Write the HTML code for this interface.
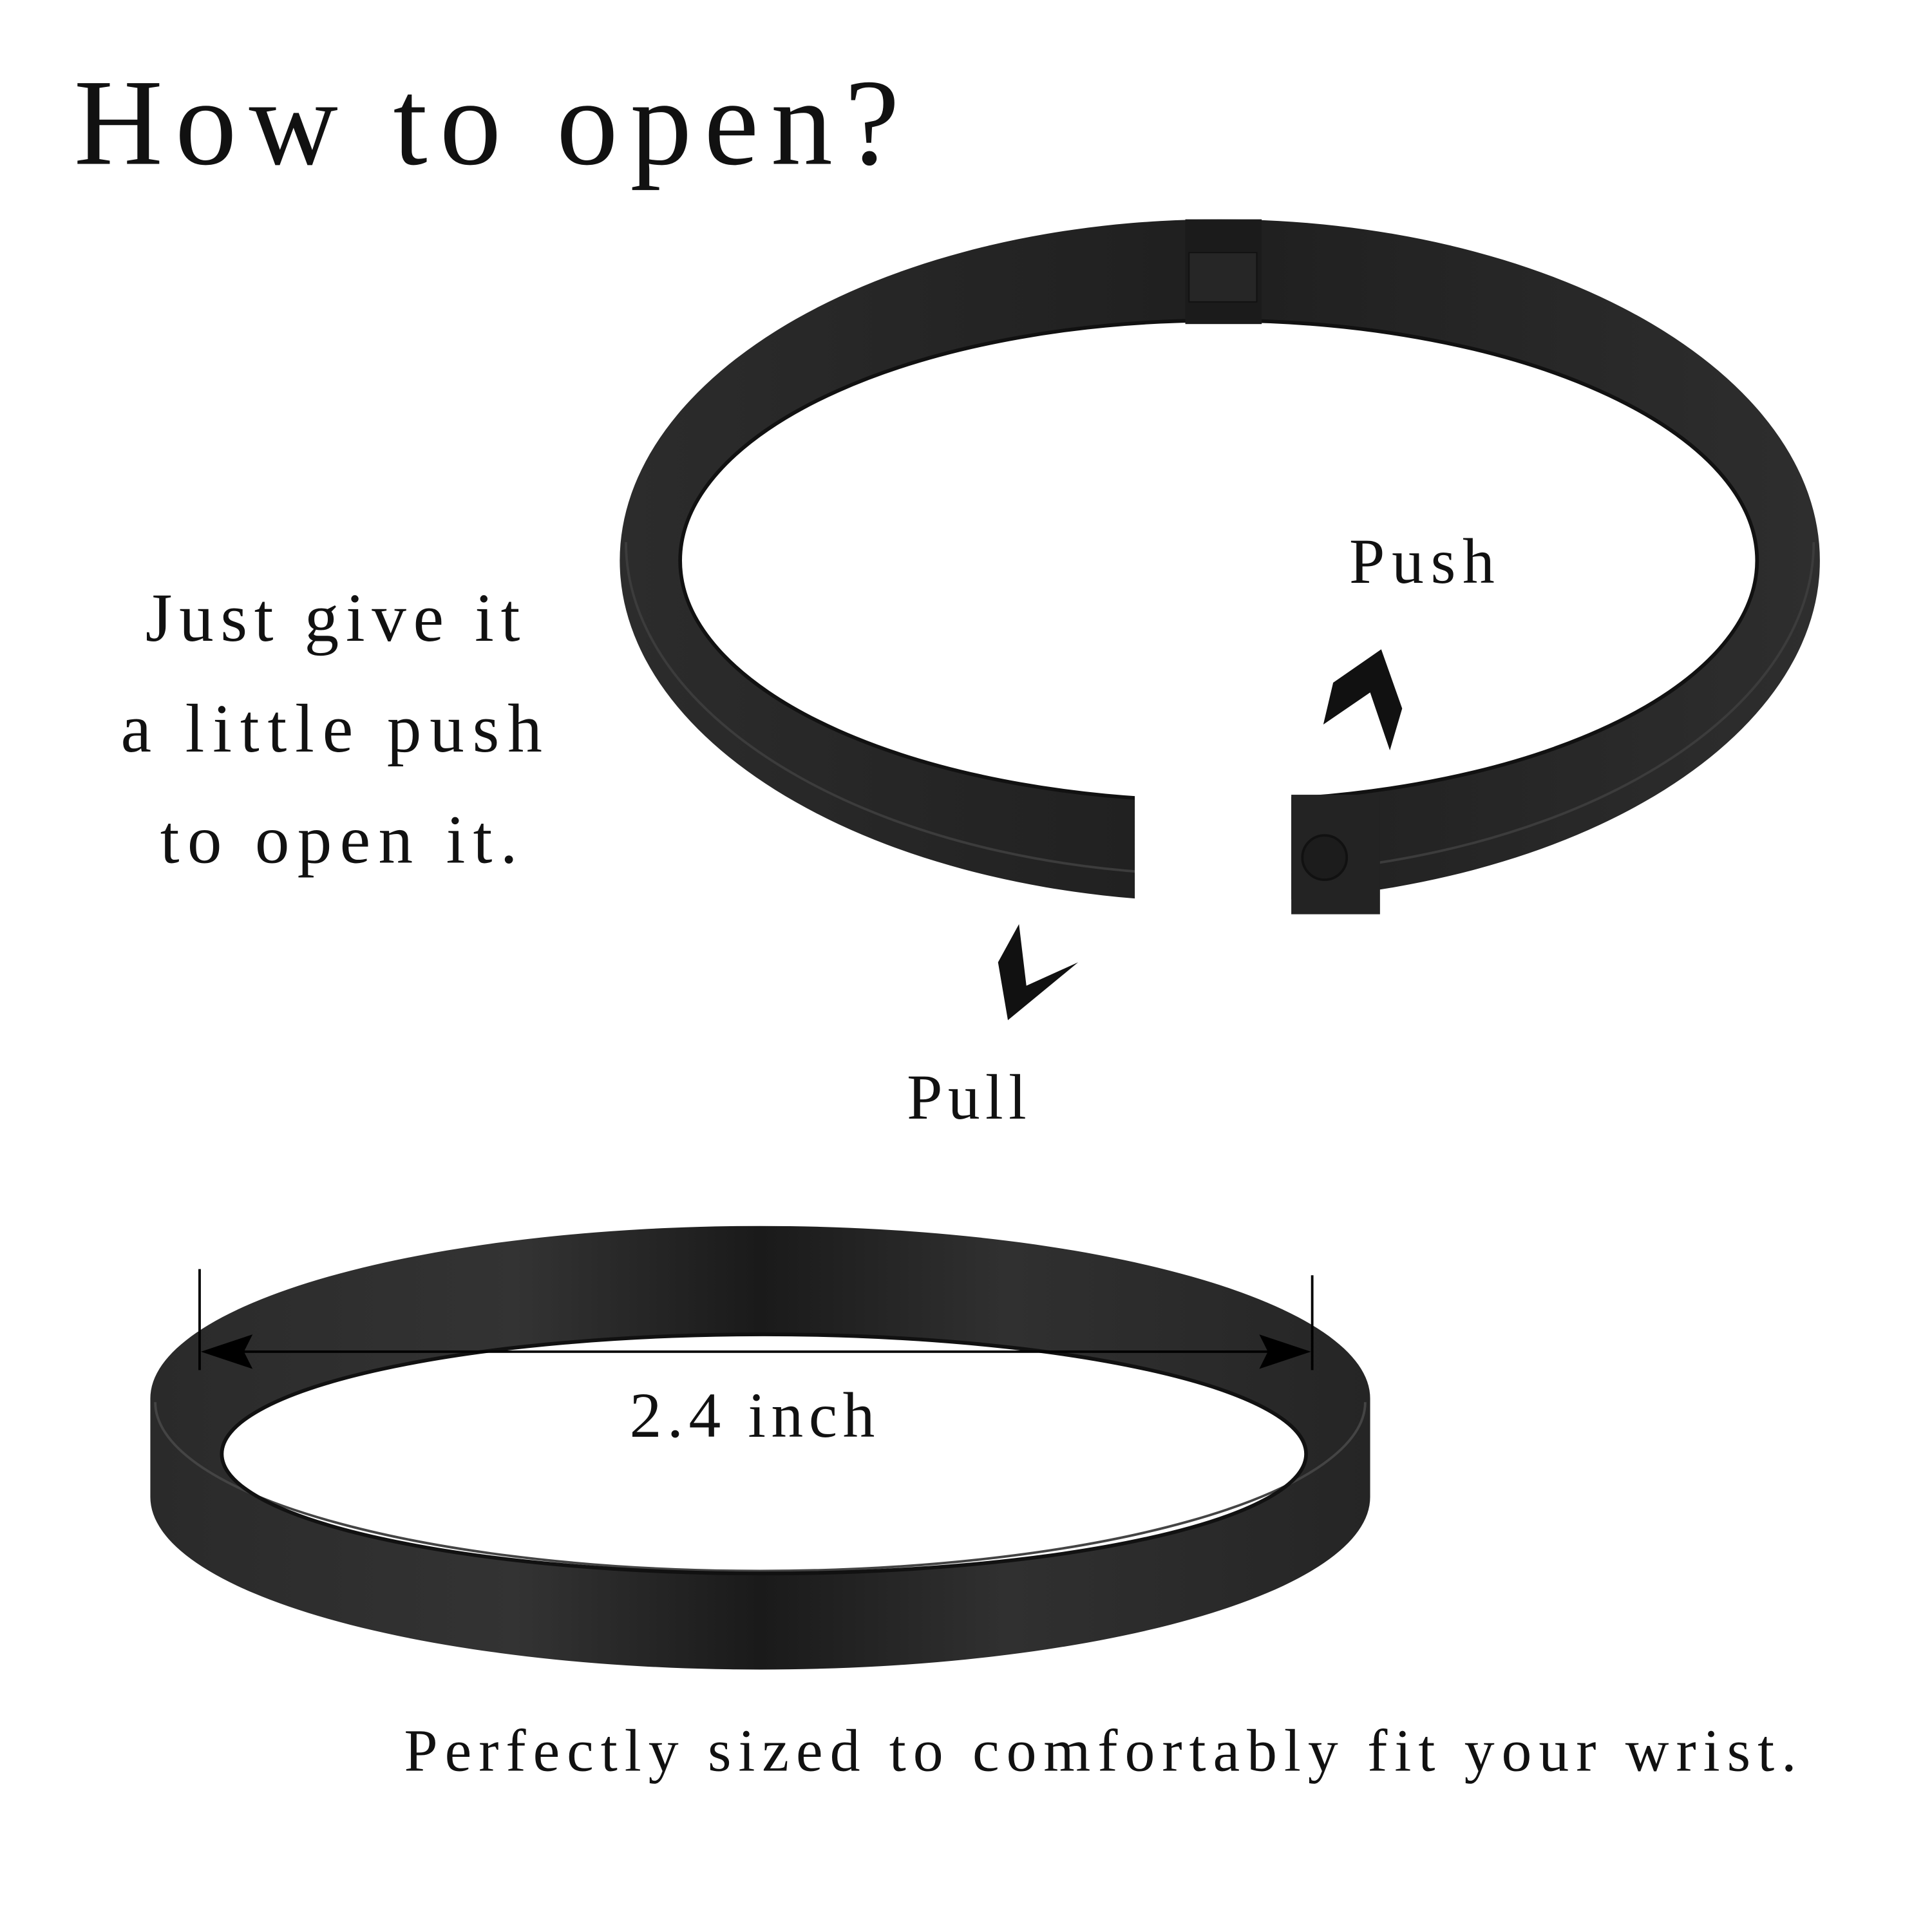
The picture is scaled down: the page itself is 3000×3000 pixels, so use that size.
<!DOCTYPE html>
<html><head><meta charset="utf-8"><style>
html,body{margin:0;padding:0;background:#fff;}
svg{display:block;}
text{font-family:"Liberation Serif","DejaVu Serif",serif;fill:#111;}
</style></head><body>
<svg width="3000" height="3000" viewBox="0 0 1568 1568" xmlns="http://www.w3.org/2000/svg">
<rect width="1568" height="1568" fill="#fff"/>
<defs>
<linearGradient id="g1" x1="0" y1="0" x2="1" y2="0">
<stop offset="0" stop-color="#2c2c2c"/><stop offset="0.5" stop-color="#1f1f1f"/><stop offset="1" stop-color="#2e2e2e"/>
</linearGradient>
<linearGradient id="g2" x1="0" y1="0" x2="1" y2="0">
<stop offset="0" stop-color="#2a2a2a"/><stop offset="0.3" stop-color="#333"/><stop offset="0.5" stop-color="#1a1a1a"/><stop offset="0.7" stop-color="#303030"/><stop offset="1" stop-color="#252525"/>
</linearGradient>
<mask id="gap"><rect width="1568" height="1568" fill="#fff"/><rect x="921" y="560" width="127" height="220" fill="#000"/></mask>
</defs>
<text x="60" y="133" font-size="100" textLength="670" lengthAdjust="spacing">How to open?</text>

<!-- top bracelet -->
<g mask="url(#gap)">
<path fill-rule="evenodd" fill="url(#g1)" d="M503,455 a487,277 0 1,0 974,0 a487,277 0 1,0 -974,0 Z M552,455 a437,195 0 1,0 874,0 a437,195 0 1,0 -874,0 Z"/>
<path fill="none" stroke="#111" stroke-width="3" d="M552,455 a437,195 0 1,0 874,0 a437,195 0 1,0 -874,0"/>
<path fill="none" stroke="#3c3c3c" stroke-width="2" d="M508,440 a482,270 0 0,0 964,0"/>
</g>
<rect x="962" y="178" width="62" height="85" fill="#1b1b1b"/>
<rect x="965" y="205" width="55" height="40" fill="#262626" stroke="#111"/>
<rect x="1048" y="645" width="72" height="97" fill="#232323"/>
<circle cx="1075" cy="696" r="18" fill="#1c1c1c" stroke="#111" stroke-width="2"/>

<!-- arrows -->
<path d="M1074,588 L1082,554 L1121,527 L1138,575 L1128,609 L1112,562 Z" fill="#111"/>
<path d="M827,750 L810,781 L818,828 L875,781 L833,800 Z" fill="#111"/>

<text x="1095" y="473" font-size="52" textLength="118" lengthAdjust="spacing">Push</text>
<text x="736" y="908" font-size="52" textLength="97" lengthAdjust="spacing">Pull</text>
<text x="118" y="520" font-size="56" textLength="304" lengthAdjust="spacing">Just give it</text>
<text x="98" y="610" font-size="56" textLength="342" lengthAdjust="spacing">a little push</text>
<text x="130" y="700" font-size="56" textLength="290" lengthAdjust="spacing">to open it.</text>

<!-- bottom bracelet -->
<path fill-rule="evenodd" fill="url(#g2)" d="M122,1135 a495,140 0 0,1 990,0 L1112,1215 a495,140 0 0,1 -990,0 Z M180,1180 a440,97 0 1,0 880,0 a440,97 0 1,0 -880,0 Z"/>
<path fill="none" stroke="#444" stroke-width="2" d="M126,1138 a491,137 0 0,0 982,0"/>
<path fill="none" stroke="#111" stroke-width="3" d="M180,1180 a440,97 0 1,0 880,0 a440,97 0 1,0 -880,0"/>

<!-- measurement -->
<g stroke="#000" stroke-width="2">
<line x1="162" y1="1030" x2="162" y2="1112"/>
<line x1="1065" y1="1035" x2="1065" y2="1112"/>
<line x1="170" y1="1097" x2="1058" y2="1097"/>
</g>
<path d="M163,1097 L205,1083 L198,1097 L205,1111 Z" fill="#000"/>
<path d="M1064,1097 L1022,1083 L1029,1097 L1022,1111 Z" fill="#000"/>
<text x="511" y="1166" font-size="52" textLength="199" lengthAdjust="spacing">2.4 inch</text>

<text x="328" y="1437" font-size="49" textLength="1130" lengthAdjust="spacing">Perfectly sized to comfortably fit your wrist.</text>
</svg>
</body></html>
